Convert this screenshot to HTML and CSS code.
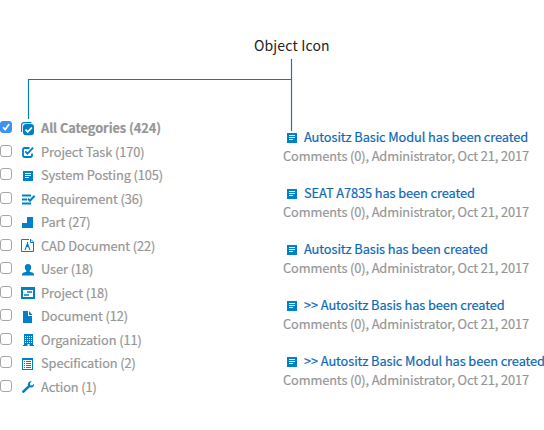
FILE: index.html
```html
<!DOCTYPE html>
<html lang="en">
<head>
<meta charset="utf-8">
<title>Object Icon</title>
<link rel="stylesheet" href="styles.css">
</head>
<body>
<svg class="defs" aria-hidden="true">
  <symbol id="posting" viewBox="0 0 16 16"><path fill="#0080c8" d="M3 3h10v10H3z"/><path stroke="#fff" d="M5 5.5h6M5 7.5h6M5 9.5h4"/></symbol>
</svg>
<header class="callout">
  <h1 class="label">Object Icon</h1>
  <svg class="lines" width="544" height="76" viewBox="0 0 544 76"><path d="M291.5 0v72M291.5 20.5h-263V60" fill="none" stroke="#087bb4" stroke-width="1.15"/></svg>
</header>
<main class="columns">
  <ul class="categories">
    <li class="row all"><span class="box checked"><svg width="12" height="12" viewBox="0 0 12 12"><path d="M3 6.2l2.2 2.4L9.2 2.9" fill="none" stroke="#fff" stroke-width="1.7"/></svg></span>
      <svg class="icon" viewBox="0 0 16 16"><path d="M1.6 11V4q0-2.4 2.4-2.4h7.5" fill="none" stroke="#0080c8" stroke-width="1.1"/><rect x="3" y="3" width="11" height="11.3" rx="3" fill="#0080c8"/><path d="M5.5 8.7l2.2 2.2 4.2-4.4" fill="none" stroke="#fff" stroke-width="1.8"/></svg><span class="name">All Categories (424)</span></li>
    <li class="row"><span class="box"></span>
      <svg class="icon" viewBox="0 0 16 16"><path d="M9.5 3H4.7Q3 3 3 4.7v5.6Q3 12 4.700 12h5.600Q12 12 12 10.300V8.500" fill="none" stroke="#0080c8" stroke-width="1.8"/><path d="M5.200 6.300l2.300 2.400 5.600-6" fill="none" stroke="#0080c8" stroke-width="1.900"/></svg><span class="name">Project Task (170)</span></li>
    <li class="row"><span class="box"></span>
      <svg class="icon"><use href="#posting"/></svg><span class="name">System Posting (105)</span></li>
    <li class="row"><span class="box"></span>
      <svg class="icon" viewBox="0 0 16 16"><path d="M2 3.500h9M2 7.500h5M2 11.500h9" stroke="#0080c8" stroke-width="1.800"/><path d="M8 6.700l2 2 4.600-4.900" fill="none" stroke="#0080c8" stroke-width="2"/></svg><span class="name">Requirement (36)</span></li>
    <li class="row"><span class="box"></span>
      <svg class="icon" viewBox="0 0 16 16"><path d="M7 2h6v11H2V8h5z" fill="#0080c8"/></svg><span class="name">Part (27)</span></li>
    <li class="row"><span class="box"></span>
      <svg class="icon" viewBox="0 0 16 16"><path d="M9 .5H1.500v12h12V4M11 .5l2.500 2.500M10.500 0v3.500H14" fill="none" stroke="#0080c8"/><path d="M7.500 3v2M7.300 5L5 11M7.700 5L10 11M6 7.500h3" fill="none" stroke="#0080c8" stroke-width="1.100"/></svg><span class="name">CAD Document (22)</span></li>
    <li class="row"><span class="box"></span>
      <svg class="icon" viewBox="0 0 16 16"><path d="M8 2c2.200 0 3.300 1.500 3.200 3.500-.1 1.500-.7 2.500-1.500 3.300v1l3.300 1q1 .4 1 2.600H2q0-2.200 1-2.600l3.300-1v-1C5.500 8 4.900 7 4.800 5.500 4.700 3.500 5.800 2 8 2z" fill="#0080c8"/></svg><span class="name">User (18)</span></li>
    <li class="row"><span class="box"></span>
      <svg class="icon" viewBox="0 0 16 16"><path d="M1 1h14v12H1zM3 4v7h10V4z" fill="#0080c8" fill-rule="evenodd"/><path d="M7 6h5M4 9h5" stroke="#0080c8" stroke-width="1.700"/></svg><span class="name">Project (18)</span></li>
    <li class="row"><span class="box"></span>
      <svg class="icon" viewBox="0 0 16 16"><path d="M3 2h5v5h4v7H3zM9 2l3.500 4H9z" fill="#0080c8"/></svg><span class="name">Document (12)</span></li>
    <li class="row"><span class="box"></span>
      <svg class="icon" viewBox="0 0 16 16"><path d="M4 1h9v11h1v1H9.500v-2h-2v2H3v-1h1z" fill="#0080c8"/><path d="M5 3.500h7M5 5.500h7M5 7.500h7M5 9.500h7" stroke="#fff" stroke-dasharray="1 1"/></svg><span class="name">Organization (11)</span></li>
    <li class="row"><span class="box"></span>
      <svg class="icon" viewBox="0 0 16 16"><path d="M2 2h11v12H2zM3 4v9h9V4z" fill="#0080c8" fill-rule="evenodd"/><path d="M4 5.500h1M6 5.500h5M4 7.500h1M6 7.500h5M4 9.500h1M6 9.500h5M4 11.500h1M6 11.500h5" stroke="#0080c8"/></svg><span class="name">Specification (2)</span></li>
    <li class="row"><span class="box"></span>
      <svg class="icon" viewBox="0 0 16 16"><path d="M11.800 1.200L9.900 3.300l.4 1.900 1.900.4L14 3.800c.5 2.500-1.600 4.400-4.200 3.500L4.300 12.500c-1.300 1.200-3-.5-1.900-1.700L8 5.600C7.200 2.900 9.300.8 11.800 1.200z" fill="#0080c8"/></svg><span class="name">Action (1)</span></li>
  </ul>
  <section class="posts">
    <article class="post"><h2 class="title"><svg class="icon"><use href="#posting"/></svg><span>Autositz Basic Modul has been created</span></h2><p class="meta">Comments (0), Administrator, Oct 21, 2017</p></article>
    <article class="post"><h2 class="title"><svg class="icon"><use href="#posting"/></svg><span>SEAT A7835 has been created</span></h2><p class="meta">Comments (0), Administrator, Oct 21, 2017</p></article>
    <article class="post"><h2 class="title"><svg class="icon"><use href="#posting"/></svg><span>Autositz Basis has been created</span></h2><p class="meta">Comments (0), Administrator, Oct 21, 2017</p></article>
    <article class="post"><h2 class="title"><svg class="icon"><use href="#posting"/></svg><span>&gt;&gt; Autositz Basis has been created</span></h2><p class="meta">Comments (0), Administrator, Oct 21, 2017</p></article>
    <article class="post"><h2 class="title"><svg class="icon"><use href="#posting"/></svg><span>&gt;&gt; Autositz Basic Modul has been created</span></h2><p class="meta">Comments (0), Administrator, Oct 21, 2017</p></article>
  </section>
</main>
</body>
</html>
```
FILE: styles.css
```css
* { box-sizing: border-box; }
body {
  margin: 0;
  width: 544px;
  height: 430px;
  overflow: hidden;
  background: #fff;
  color: #969696;
  font: 12.8px/20px "Noto Sans CJK SC", "Open Sans", sans-serif;
}
.defs { position: absolute; width: 0; height: 0; }
.callout { height: 117px; padding-top: 35px; }
.label {
  margin: 0 0 4px 254px;
  font-size: 14px;
  font-weight: 400;
  line-height: 20px;
  letter-spacing: .16px;
  color: #222;
}
.lines { display: block; }
.columns { display: flex; align-items: flex-start; }
.categories { flex: none; width: 283px; margin: 0; padding: 0; list-style: none; }
.row { display: flex; height: 24px; padding-top: 4px; white-space: nowrap; }
.row:nth-child(even) { height: 23px; }
.box {
  width: 12px;
  height: 12px;
  margin-right: 8px;
  border: 1px solid #a6a6a6;
  border-radius: 3px;
  background: #fff;
}
.checked { border: 0; background: #3b93f8; }
.checked svg { display: block; }
.icon { flex: none; width: 16px; height: 16px; }
.name { margin: -3px 0 0 5px; letter-spacing: -.09px; -webkit-text-stroke: .2px; }
.all .name { font-weight: 700; letter-spacing: -.06px; -webkit-text-stroke: .2px; }
.posts { flex: none; width: 261px; padding-top: 10px; white-space: nowrap; }
.post { height: 56px; }
.title {
  display: flex;
  align-items: flex-start;
  gap: 4px;
  height: 19px;
  margin: 0 0 0 1px;
  font-size: inherit;
  font-weight: 400;
  letter-spacing: -.09px;
  color: #0b69b7;
}
.title .icon { margin-top: 3px; }
.title span, .meta { -webkit-text-stroke: .2px; }
.meta { margin: 0; height: 20px; letter-spacing: -.11px; }
```
